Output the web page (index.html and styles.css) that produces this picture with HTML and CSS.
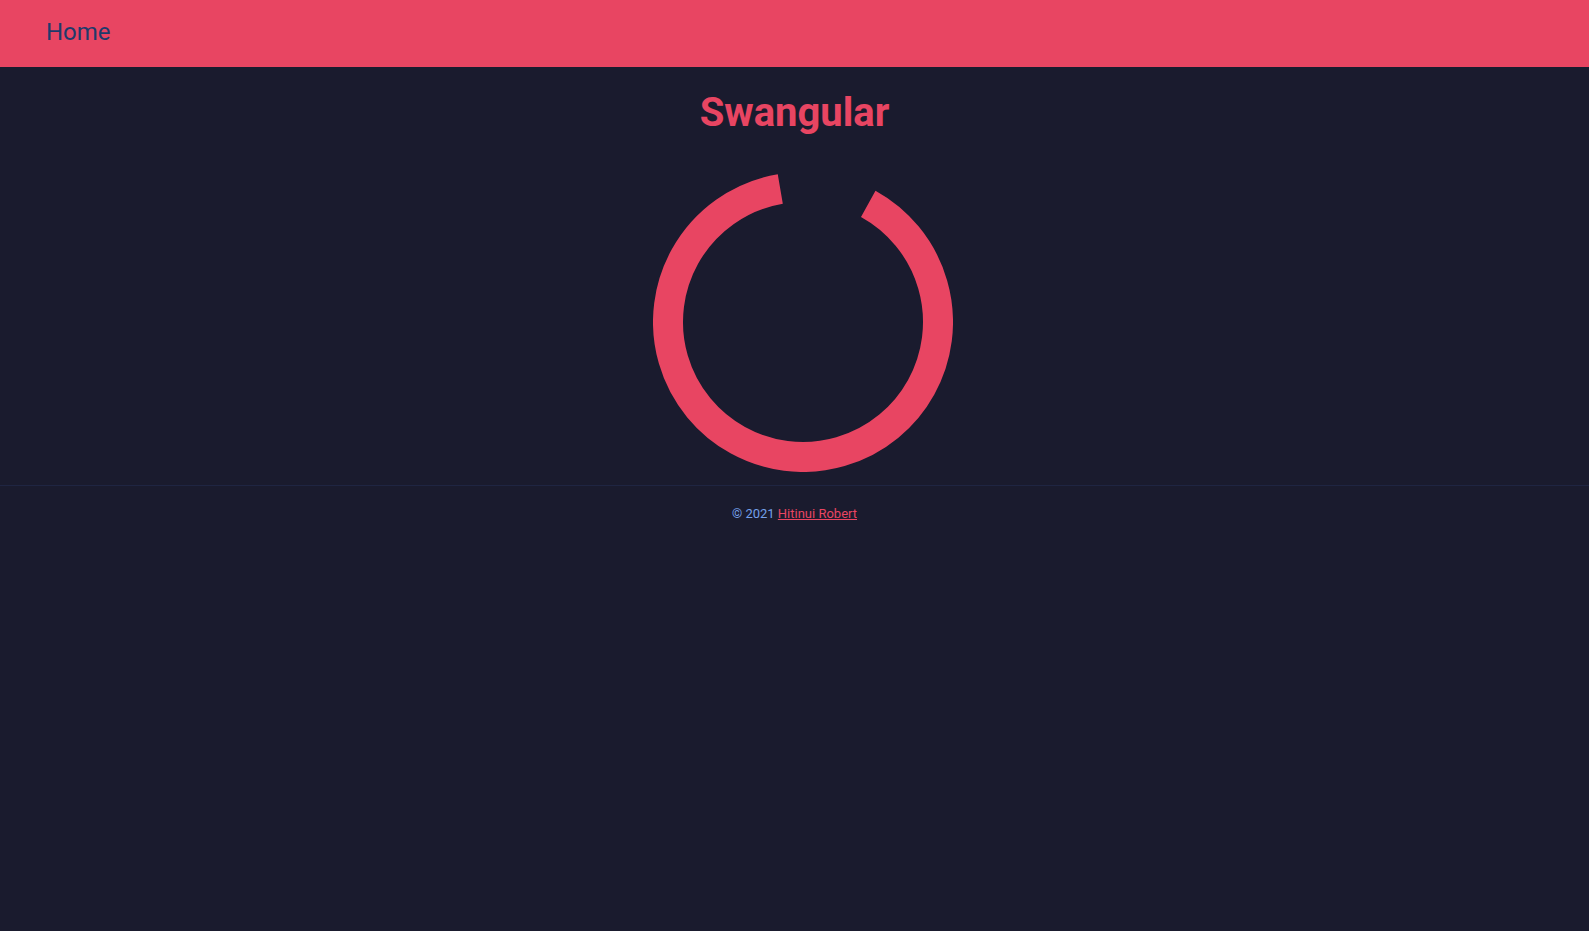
FILE: index.html
```html
<!DOCTYPE html>
<html lang="en">
<head>
<meta charset="utf-8">
<title>Swangular</title>
<link rel="stylesheet" href="styles.css">
</head>
<body>
<header class="topbar">
  <a class="nav-home" href="#">Home</a>
</header>
<main class="content">
  <h1 class="title">Swangular</h1>
  <div class="spinner-wrap">
    <svg class="spinner" width="300" height="300" viewBox="0 0 300 300">
      <circle cx="150" cy="150" r="135" fill="none" stroke="#e84562" stroke-width="30" stroke-dasharray="757 1000" transform="rotate(-61.1 150 150)"/>
    </svg>
  </div>
</main>
<footer class="footer">
  <p class="copy">© 2021 <a class="author" href="#">Hitinui Robert</a></p>
</footer>
</body>
</html>
```
FILE: styles.css
```css
html, body {
  margin: 0;
  padding: 0;
}
body {
  background: #1a1b2e;
  font-family: Roboto, "Liberation Sans", sans-serif;
  min-height: 931px;
}
.topbar {
  height: 67px;
  background: #e84562;
  display: flex;
  align-items: center;
  padding-left: 46px;
  box-sizing: border-box;
}
.nav-home {
  color: #1e3a6b;
  font-size: 24px;
  text-decoration: none;
  position: relative;
  top: -2px;
}
.content {
  display: flex;
  flex-direction: column;
  align-items: center;
  padding-bottom: 13px;
  border-bottom: 1px solid #1f2542;
}
.title {
  margin: 21px 0 0;
  font-size: 40px;
  font-weight: 700;
  color: #e84562;
  line-height: 49px;
}
.spinner-wrap {
  margin-top: 35px;
  margin-left: 17px;
  width: 300px;
  height: 300px;
}
.spinner {
  display: block;
}
.footer {
  display: flex;
  justify-content: center;
}
.copy {
  margin: 20px 0 0;
  font-size: 13px;
  color: #74a0ea;
}
.author {
  color: #e84562;
  text-decoration: underline;
}
```
